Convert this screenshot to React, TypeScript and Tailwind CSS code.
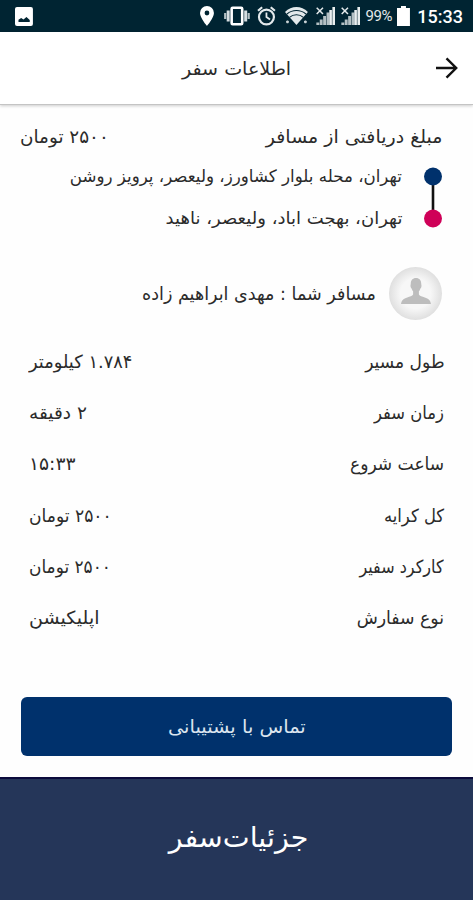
import type { ReactNode } from "react";
import { clsx } from "clsx";

const details = [
  { label: "طول مسیر", value: "۱.۷۸۴ کیلومتر", labelFit: "scale-x-95", valueFit: "scale-x-99" },
  { label: "زمان سفر", value: "۲ دقیقه", labelFit: "scale-x-91", valueFit: "scale-x-103" },
  { label: "ساعت شروع", value: "۱۵:۳۳", labelFit: "scale-x-95", valueFit: "scale-x-104" },
  { label: "کل کرایه", value: "۲۵۰۰ تومان", labelFit: "scale-x-91", valueFit: "scale-x-95" },
  { label: "کارکرد سفیر", value: "۲۵۰۰ تومان", labelFit: "scale-x-89", valueFit: "scale-x-94" },
  { label: "نوع سفارش", value: "اپلیکیشن", labelFit: "scale-x-96", valueFit: "scale-x-106" },
];

function Signal() {
  return (
    <svg width="19" height="20" viewBox="0 0 19 20">
      <path d="M.7 1.700l6.300 6.300M7 1.700L.7 8" stroke="#e3e9eb" strokeWidth="1.500" />
      <path
        d="M1.800 16.500V19M5.200 13.500V19M8.600 10V19M12 6.500V19"
        stroke="#b4c0c4"
        strokeWidth="2.900"
      />
      <path d="M14.600 4V19M17.700 1V19" stroke="#e9eeef" strokeWidth="2.600" />
    </svg>
  );
}

function StatusBar() {
  return (
    <div
      dir="ltr"
      className="flex h-8 items-center bg-[#002432] pr-2.5 pl-[15px] text-white"
    >
      <svg width="18" height="19" viewBox="0 0 18 19">
        <rect width="18" height="19" rx="2" fill="#fff" />
        <path d="M3.500 15v-2.200L6.200 11l2.300 1.600 3-2.600 3.300 3V15z" fill="#002432" />
      </svg>
      <svg className="ml-[167px]" width="14" height="20" viewBox="0 0 14 20">
        <path
          fillRule="evenodd"
          d="M7 0a7 7 0 0 0-7 7c0 5 7 13 7 13s7-8 7-13a7 7 0 0 0-7-7zm0 4.600a2.400 2.400 0 1 1 0 4.800 2.400 2.400 0 0 1 0-4.800z"
          fill="#fff"
        />
      </svg>
      <svg className="ml-2.5" width="26" height="20" viewBox="0 0 26 20">
        <rect x="7.700" y="1.700" width="10.600" height="16.600" rx="1" fill="none" stroke="#fff" strokeWidth="2.600" />
        <path d="M4.200 4.500v11M21.800 4.500v11" stroke="#d5dde0" strokeWidth="3" />
        <path d="M1.200 7v6M24.800 7v6" stroke="#b4c0c4" strokeWidth="2.200" />
      </svg>
      <svg className="ml-[7px]" width="19" height="20" viewBox="0 0 19 20">
        <g fill="none" stroke="#e3e9eb">
          <circle cx="9.500" cy="11" r="7.500" strokeWidth="2.200" />
          <path d="M9.500 6.500V11l3.600 2.600" strokeWidth="1.800" />
          <path d="M1 4.700l4.200-3.500M18 4.700l-4.200-3.500" strokeWidth="2.200" />
        </g>
      </svg>
      <svg className="ml-[9px]" width="23" height="20" viewBox="0 0 23 20">
        <path d="M0 6C6.500-.800 16.500-.800 23 6L11.500 19z" fill="#e3e9eb" />
        <g fill="none" stroke="#002432" strokeWidth="1.100">
          <path d="M2 8c5.500-4.600 13.500-4.600 19 0" />
          <path d="M4.500 11.300c4-3.400 10-3.400 14 0" />
        </g>
        <path d="M2.500 14.500v2.800M1.100 15.900h2.800M20.500 14.500v2.800M19.100 15.900h2.800" stroke="#c9d2d5" strokeWidth="1.600" />
      </svg>
      <span className="ml-2 flex gap-1.5">
        <Signal />
        <Signal />
      </span>
      <span className="ml-1.5 w-7 text-[15px] tracking-[-0.4px] text-[#e3e9eb]">
        99%
      </span>
      <svg className="ml-1" width="13" height="20" viewBox="0 0 13 20">
        <path d="M4 0h5v2h4v18H0V2h4z" fill="#fff" />
      </svg>
      <span className="ml-[7px] text-[18px] font-medium">15:33</span>
    </div>
  );
}

function Fa({ className, children }: { className?: string; children: ReactNode }) {
  return (
    <span
      className={clsx(
        "block font-['DejaVu_Sans',sans-serif] whitespace-nowrap",
        className,
      )}
    >
      {children}
    </span>
  );
}

export default function App() {
  return (
    <main
      dir="rtl"
      className="flex h-[900px] w-[473px] flex-col overflow-hidden bg-[#fefefe] font-['Roboto',sans-serif] text-[#2b2b2b]"
    >
      <StatusBar />

      <header className="grid h-[73px] shrink-0 grid-cols-[72px_1fr_72px] items-center border-b border-[#c4c4c4] bg-white shadow-[0_1px_3px_rgba(0,0,0,0.2)]">
        <svg className="mr-[15px]" width="22" height="22" viewBox="0 0 22 22">
          <path d="M0 11h20M10.500 1.300L20.200 11l-9.700 9.700" fill="none" stroke="#111" strokeWidth="2.400" />
        </svg>
        <h1 className="flex justify-center">
          <Fa className="scale-x-106 text-[18px]">اطلاعات سفر</Fa>
        </h1>
      </header>

      {/* Fare and route */}
      <section className="flex h-[51px] items-center justify-between pt-3 pr-[31px] pl-5 text-[18px]">
        <Fa className="origin-right scale-x-[1.055]">مبلغ دریافتی از مسافر</Fa>
        <Fa className="origin-left scale-x-102">۲۵۰۰ تومان</Fa>
      </section>
      <section className="flex h-[82px] items-center pr-[31px]">
        <svg width="18" height="62" viewBox="0 0 18 62">
          <path d="M9 9v44" stroke="#111" strokeWidth="2.600" />
          <circle cx="9" cy="10.500" r="9" fill="#00316c" />
          <circle cx="9" cy="52.500" r="9" fill="#cf0058" />
        </svg>
        <div className="mr-[22px] text-[17px]">
          <Fa className="origin-right scale-x-98 leading-[42px]">تهران، محله بلوار کشاورز، ولیعصر، پرویز روشن</Fa>
          <Fa className="w-fit origin-right scale-x-106 leading-[42px]">تهران، بهجت اباد، ولیعصر، ناهید</Fa>
        </div>
      </section>

      {/* Passenger */}
      <section className="mt-7 flex h-[54px] items-center pr-[31px]">
        <div className="flex size-[53px] items-center justify-center rounded-full bg-[radial-gradient(circle,#f7f7f7_40%,#e0e0e0_70%)]">
          <svg className="mb-1" width="30" height="26" viewBox="0 0 30 26">
            <path
              d="M15 0c3.400 0 5.200 2.300 5.200 5.600 0 1.200.5 1.800.2 3.200-.2 1.100-.9 1.300-1.300 2.400-.3.900-.7 1.500-1.200 2.100v3.200c.7 1.400 3.300 2 5.900 3 3.500 1.300 5.700 2.500 6.200 6.500H0c.5-4 2.700-5.200 6.200-6.500 2.600-1 5.200-1.600 5.900-3v-3.200c-.5-.6-.9-1.200-1.200-2.100-.4-1.100-1.100-1.300-1.300-2.400-.3-1.400.2-2 .2-3.200C9.800 2.300 11.600 0 15 0z"
              fill="#bdbdbd"
            />
          </svg>
        </div>
        <Fa className="mr-[13px] origin-right scale-x-[0.975] text-[18px]">مسافر شما : مهدی ابراهیم زاده</Fa>
      </section>

      <dl className="mt-4 px-[29px] text-[18px]">
        {details.map(({ label, value, labelFit, valueFit }) => (
          <div key={label} className="flex h-[51.2px] items-center justify-between">
            <dt>
              <Fa className={clsx("origin-right", labelFit)}>{label}</Fa>
            </dt>
            <dd>
              <Fa className={clsx("origin-left", valueFit)}>{value}</Fa>
            </dd>
          </div>
        ))}
      </dl>

      <button className="mx-[21px] mt-[54px] flex h-[59px] w-[431px] shrink-0 items-center justify-center rounded-[6px] bg-[#00316c] text-[18px] text-[#dce5ef]">
        <Fa className="scale-x-108">تماس با پشتیبانی</Fa>
      </button>

      <footer className="mt-auto flex h-[123px] shrink-0 items-center justify-center border-t-2 border-[#0b0b3c] bg-[#253659] text-[28px] text-white">
        <Fa className="mb-1 -mr-1 scale-x-102">جزئیات‌سفر</Fa>
      </footer>
    </main>
  );
}
